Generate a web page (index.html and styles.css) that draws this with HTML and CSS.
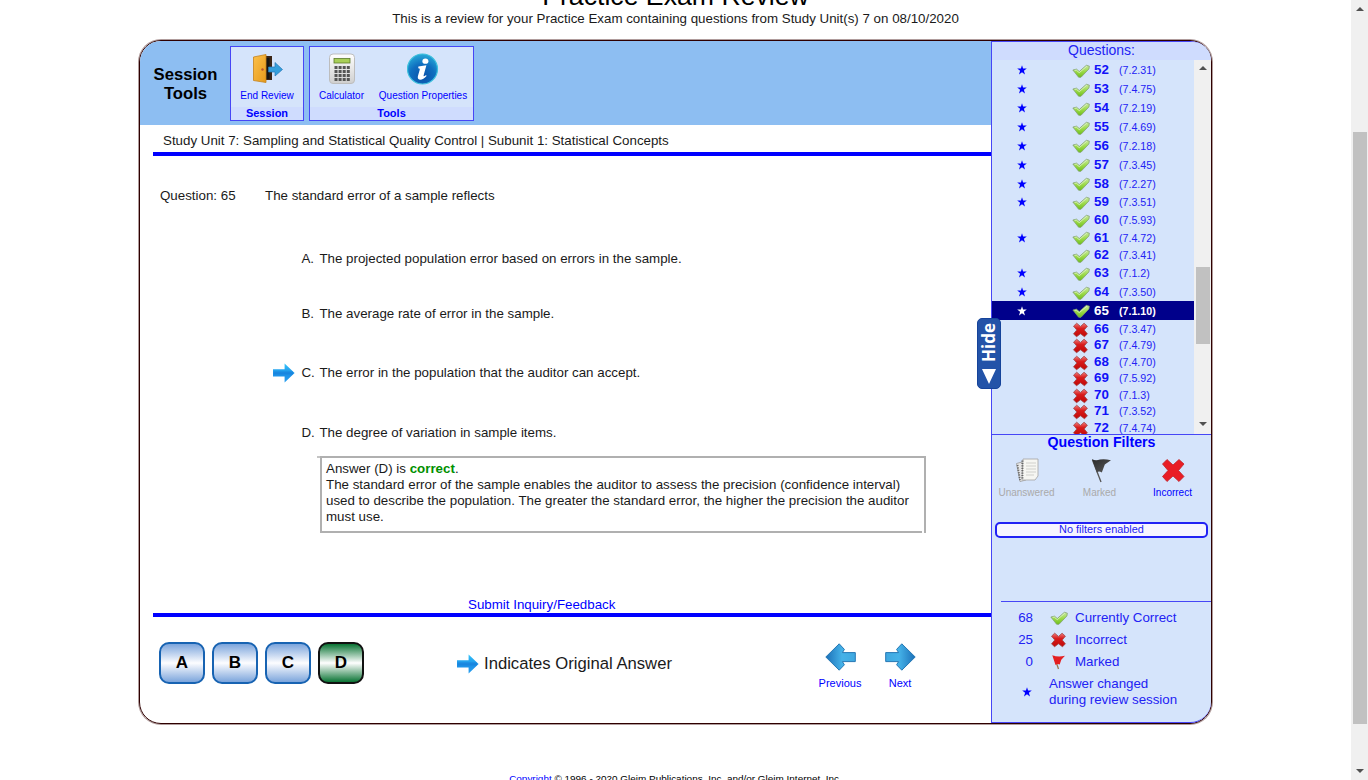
FILE: index.html
```html
<!DOCTYPE html>
<html lang="en">
<head>
<meta charset="utf-8">
<title>Practice Exam Review</title>
<link rel="stylesheet" href="styles.css">
</head>
<body>
<svg class="defs" width="0" height="0" aria-hidden="true">
  <defs>
    <linearGradient id="gGreen" x1="0" y1="0" x2="0" y2="1"><stop offset="0" stop-color="#c9e8a4"/><stop offset=".5" stop-color="#9ddb4c"/><stop offset="1" stop-color="#6fbf1c"/></linearGradient>
    <linearGradient id="gRed" x1="0" y1="0" x2="0" y2="1"><stop offset="0" stop-color="#f0797a"/><stop offset=".4" stop-color="#d81b1b"/><stop offset="1" stop-color="#c00808"/></linearGradient>
    <linearGradient id="gArrow" x1="0" y1="0" x2="0" y2="1"><stop offset="0" stop-color="#35c6fb"/><stop offset=".55" stop-color="#1b8fe6"/><stop offset="1" stop-color="#2aa0f0"/></linearGradient>
    <linearGradient id="gNav" x1="0" y1="0" x2="1" y2="0"><stop offset="0" stop-color="#3fa8e0"/><stop offset=".45" stop-color="#45b2e8"/><stop offset="1" stop-color="#1c70b8"/></linearGradient>
    <linearGradient id="gDoor" x1="0" y1="0" x2="1" y2="1"><stop offset="0" stop-color="#fcc04a"/><stop offset="1" stop-color="#e59a1c"/></linearGradient>
    <linearGradient id="gCalc" x1="0" y1="0" x2="0" y2="1"><stop offset="0" stop-color="#fff"/><stop offset="1" stop-color="#cfcfcf"/></linearGradient>
    <radialGradient id="gInfo" cx=".5" cy=".75" r=".75"><stop offset="0" stop-color="#0a50a8"/><stop offset=".55" stop-color="#0f6fc0"/><stop offset="1" stop-color="#27a9d8"/></radialGradient>
    <linearGradient id="gFlag" x1="0" y1="0" x2="1" y2="1"><stop offset="0" stop-color="#2b2b2b"/><stop offset="1" stop-color="#5a5a5a"/></linearGradient>
    <symbol id="check" viewBox="0 0 16 14"><path d="M.4 5.6 3.8 4.8 6.4 7 13 1.2 15.8 2 15.4 4.6 8 12.4 5.8 12.4Z" fill="url(#gGreen)" stroke="#7f9f70" stroke-width=".7" stroke-linejoin="round"/><path d="M2 6 3.6 5.7 6.4 8.1 13.4 2" fill="none" stroke="#e6f6d4" stroke-width=".7"/></symbol>
    <symbol id="cross" viewBox="0 0 16 16"><path d="M4.2 1.2 8 4.4 11.6 1.2 14.9 4.2 11.7 8 14.9 11.8 12 14.8 8 11.8 4 14.8 1 11.8 4.3 8 1 4.2Z" fill="url(#gRed)" stroke="#a04646" stroke-width=".8" stroke-linejoin="round"/></symbol>
    <symbol id="star" viewBox="0 0 10 10"><path d="M5 .2 6.1 3.6H9.8L6.9 5.8 8 9.6 5 7.3 2 9.6 3.1 5.8.2 3.6H3.9Z" fill="currentColor"/></symbol>
    <symbol id="arrow" viewBox="0 0 22 20"><path d="M0 6.2H11.6V.4L21.6 10 11.6 19.6V13.6H0Z" fill="url(#gArrow)"/><path d="M.5 9.9H20" stroke="#1578d6" stroke-width="3" opacity=".45"/></symbol>
    <symbol id="nav" viewBox="0 0 31 28"><path d="M.7 9.6H13.6L11.6 6.4 16.8.8 30.2 14 16.8 27.2 11.6 21.8 13.6 18.6H.7Z" fill="url(#gNav)" stroke="#2678b4" stroke-width="1"/></symbol>
  </defs>
</svg>

<div class="page">
  <header class="heading">
    <h1 class="title">Practice Exam Review</h1>
    <p class="subtitle">This is a review for your Practice Exam containing questions from Study Unit(s) 7 on 08/10/2020</p>
  </header>

  <div class="frame">
    <main class="main">
      <div class="toolbar">
        <div class="toolbar-title">Session<br>Tools</div>
        <section class="group group-session">
          <div class="tools">
            <a class="tool"><svg class="tool-icon" viewBox="0 0 32 32"><path d="M13 3H21V27H13Z" fill="#3a2415"/><path d="M14.5 5H18.5V26H14.5Z" fill="#151515"/><path d="M2.5 4 15 1.5V29.5L2.5 27.5Z" fill="url(#gDoor)" stroke="#c4811c" stroke-width=".8"/><circle cx="11.5" cy="16.5" r="1.2" fill="#b5532e"/><path d="M17.5 14H24V9.5L31.5 16.5 24 23V19H17.5Z" fill="#359fdc" stroke="#2777b6" stroke-width=".7"/></svg><span class="tool-label">End Review</span></a>
          </div>
          <div class="group-name">Session</div>
        </section>
        <section class="group group-tools">
          <div class="tools">
            <a class="tool tool-calc"><svg class="tool-icon" viewBox="0 0 32 32"><rect x="3.5" y="1" width="25" height="29.5" rx="3.5" fill="url(#gCalc)" stroke="#bdbdbd"/><rect x="8" y="5.5" width="16" height="4.5" fill="#a8cf58" stroke="#5c7a2c" stroke-width=".8"/><path d="M8.5 14.5H24M8.5 18.5H24M8.5 22.5H24M8.5 26.5H24" stroke="#555" stroke-width="3" stroke-dasharray="3 1.1"/></svg><span class="tool-label">Calculator</span></a>
            <a class="tool tool-info"><svg class="tool-icon" viewBox="0 0 32 32"><circle cx="15.5" cy="16" r="15" fill="url(#gInfo)" stroke="#3cc0dc" stroke-width="1.2"/><ellipse cx="18.4" cy="8.2" rx="3" ry="2.6" fill="#fff"/><path d="M11.4 13.6 19.4 12.2 16.6 22.6Q16.4 24 18.6 22.2L19.8 22.8Q15.6 27.4 12.2 26.6 10.2 25.8 11 22.8L12.8 16.6Q13 15.2 11.2 15.2Z" fill="#fff"/></svg><span class="tool-label">Question Properties</span></a>
          </div>
          <div class="group-name">Tools</div>
        </section>
      </div>

      <div class="unit">Study Unit 7: Sampling and Statistical Quality Control | Subunit 1: Statistical Concepts</div>

      <div class="content">
        <div class="question"><span class="question-no">Question: 65</span><span class="question-text">The standard error of a sample reflects</span></div>
        <ol class="answers">
          <li class="answer"><span class="mark"></span><span class="letter">A.</span><span>The projected population error based on errors in the sample.</span></li>
          <li class="answer"><span class="mark"></span><span class="letter">B.</span><span>The average rate of error in the sample.</span></li>
          <li class="answer"><span class="mark"><svg class="original"><use href="#arrow"/></svg></span><span class="letter">C.</span><span>The error in the population that the auditor can accept.</span></li>
          <li class="answer"><span class="mark"></span><span class="letter">D.</span><span>The degree of variation in sample items.</span></li>
        </ol>
        <div class="explain">
          <div>Answer (D) is <b class="ok">correct</b>.</div>
          <div>The standard error of the sample enables the auditor to assess the precision (confidence interval)</div>
          <div>used to describe the population. The greater the standard error, the higher the precision the auditor</div>
          <div>must use.</div>
        </div>
        <a class="feedback">Submit Inquiry/Feedback</a>
      </div>

      <footer class="bottom">
        <button class="pick">A</button><button class="pick">B</button><button class="pick">C</button><button class="pick pick-right">D</button>
        <div class="legend-original"><svg class="original"><use href="#arrow"/></svg><span>Indicates Original Answer</span></div>
        <a class="nav"><svg class="nav-icon flip"><use href="#nav"/></svg>Previous</a>
        <a class="nav"><svg class="nav-icon"><use href="#nav"/></svg>Next</a>
      </footer>
    </main>

    <aside class="side">
      <div class="side-title">Questions:</div>
      <div class="list-wrap">
        <div class="list">
          <div class="row starred"><svg class="star"><use href="#star"/></svg><svg class="check"><use href="#check"/></svg><b>52</b><span>(7.2.31)</span></div>
          <div class="row starred"><svg class="star"><use href="#star"/></svg><svg class="check"><use href="#check"/></svg><b>53</b><span>(7.4.75)</span></div>
          <div class="row starred"><svg class="star"><use href="#star"/></svg><svg class="check"><use href="#check"/></svg><b>54</b><span>(7.2.19)</span></div>
          <div class="row starred"><svg class="star"><use href="#star"/></svg><svg class="check"><use href="#check"/></svg><b>55</b><span>(7.4.69)</span></div>
          <div class="row starred"><svg class="star"><use href="#star"/></svg><svg class="check"><use href="#check"/></svg><b>56</b><span>(7.2.18)</span></div>
          <div class="row starred"><svg class="star"><use href="#star"/></svg><svg class="check"><use href="#check"/></svg><b>57</b><span>(7.3.45)</span></div>
          <div class="row starred"><svg class="star"><use href="#star"/></svg><svg class="check"><use href="#check"/></svg><b>58</b><span>(7.2.27)</span></div>
          <div class="row starred"><svg class="star"><use href="#star"/></svg><svg class="check"><use href="#check"/></svg><b>59</b><span>(7.3.51)</span></div>
          <div class="row"><i></i><svg class="check"><use href="#check"/></svg><b>60</b><span>(7.5.93)</span></div>
          <div class="row starred"><svg class="star"><use href="#star"/></svg><svg class="check"><use href="#check"/></svg><b>61</b><span>(7.4.72)</span></div>
          <div class="row"><i></i><svg class="check"><use href="#check"/></svg><b>62</b><span>(7.3.41)</span></div>
          <div class="row starred"><svg class="star"><use href="#star"/></svg><svg class="check"><use href="#check"/></svg><b>63</b><span>(7.1.2)</span></div>
          <div class="row starred"><svg class="star"><use href="#star"/></svg><svg class="check"><use href="#check"/></svg><b>64</b><span>(7.3.50)</span></div>
          <div class="row starred current"><svg class="star"><use href="#star"/></svg><svg class="check"><use href="#check"/></svg><b>65</b><span>(7.1.10)</span></div>
          <div class="row"><i></i><svg class="cross"><use href="#cross"/></svg><b>66</b><span>(7.3.47)</span></div>
          <div class="row"><i></i><svg class="cross"><use href="#cross"/></svg><b>67</b><span>(7.4.79)</span></div>
          <div class="row"><i></i><svg class="cross"><use href="#cross"/></svg><b>68</b><span>(7.4.70)</span></div>
          <div class="row"><i></i><svg class="cross"><use href="#cross"/></svg><b>69</b><span>(7.5.92)</span></div>
          <div class="row"><i></i><svg class="cross"><use href="#cross"/></svg><b>70</b><span>(7.1.3)</span></div>
          <div class="row"><i></i><svg class="cross"><use href="#cross"/></svg><b>71</b><span>(7.3.52)</span></div>
          <div class="row"><i></i><svg class="cross"><use href="#cross"/></svg><b>72</b><span>(7.4.74)</span></div>
        </div>
        <div class="scroll scroll-list"><span class="up"></span><span class="thumb"></span><span class="down"></span></div>
      </div>
      <div class="filters">
        <div class="filters-title">Question Filters</div>
        <div class="filter-row">
          <a class="filter off"><svg class="filter-icon" viewBox="0 0 28 28"><path d="M3.5 7.5 9 6 13 24 7 25.5Z" fill="#e8e8e8" stroke="#999" stroke-width=".8"/><path d="M10 3H25V20L22 24H9Z" fill="#f6f6f2" stroke="#aaa" stroke-width=".9"/><path d="M13 7H23M13 10H23M13 13H23M13 16H23M13 19H21" stroke="#d0d0cc"/><path d="M9.4 4.5V23" stroke="#666" stroke-width="2" stroke-dasharray="1.2 1.2"/><path d="M4.5 9 7 24" stroke="#666" stroke-width="1.8" stroke-dasharray="1.2 1.2"/></svg>Unanswered</a>
          <a class="filter off"><svg class="filter-icon" viewBox="0 0 28 28"><path d="M6.5 4 15 26" stroke="#555" stroke-width="1.3"/><path d="M6 3Q9 5 14 3.6 18 2.6 25 4.2L18.8 8.6 15.8 16.5Q13 14.6 10.8 16.5Z" fill="url(#gFlag)"/></svg>Marked</a>
          <a class="filter"><svg class="filter-icon" viewBox="0 0 28 28"><path d="M8 3.5 14 9 20 3.5 25 8 19.5 14.5 25 20.5 20 25.5 14 20 8 25.5 3.5 20.5 9 14.5 3.5 8Z" fill="#e91d25" stroke="#bf2228" stroke-width=".8"/></svg>Incorrect</a>
        </div>
        <div class="filter-state">No filters enabled</div>
      </div>
      <div class="summary">
        <div class="sum"><span class="count">68</span><svg class="check"><use href="#check"/></svg><span>Currently Correct</span></div>
        <div class="sum"><span class="count">25</span><svg class="cross"><use href="#cross"/></svg><span>Incorrect</span></div>
        <div class="sum"><span class="count">0</span><svg class="cross" viewBox="0 0 16 16"><path d="M3.5 2 8 15" stroke="#9a7a50" stroke-width="1.3"/><path d="M1.8 1.2Q7 3.2 14.5 1.8L10.8 5.8 9.2 10.6Q7 9.4 5 11Z" fill="#e41f22"/></svg><span>Marked</span></div>
        <div class="changed"><svg class="star"><use href="#star"/></svg><span>Answer changed<br>during review session</span></div>
      </div>
      <div class="hide"><span>Hide</span><i class="hide-arrow"></i></div>
    </aside>
  </div>

  <p class="copyright"><a>Copyright</a> © 1996 - 2020 Gleim Publications, Inc. and/or Gleim Internet, Inc.</p>
</div>
<div class="scroll scroll-page"><span class="up"></span><span class="thumb"></span><span class="down"></span></div>
</body>
</html>
```
FILE: styles.css
```css
* { box-sizing: border-box; }
body { margin: 0; height: 780px; overflow: hidden; display: flex; background: #fff; color: #1a1a1a; font: 13.333px/16px "Liberation Sans", Arial, sans-serif; }
.defs { position: absolute; }
svg { display: block; }
a { color: #00f; }
.page { width: 1351px; height: 780px; overflow: hidden; }
.heading { display: flow-root; height: 40px; text-align: center; }
.title { margin: -19px 0 0; font-size: 26.67px; line-height: 30px; font-weight: 400; color: #000; }
.subtitle { margin: 0; line-height: 16px; }

.frame { display: flex; width: 1073px; height: 684px; margin-left: 139px; border: 1px solid #2e0000; border-radius: 22px; box-shadow: 0 0 0 1px rgba(58, 8, 8, .4); }
.main { width: 851px; display: flex; flex-direction: column; }
.toolbar { display: flex; height: 84px; padding-top: 5px; background: #8dbef2; border-top-left-radius: 21px; }
.toolbar-title { width: 90px; padding: 19px 0 0 1px; text-align: center; font-size: 16.67px; line-height: 19px; font-weight: 700; color: #000; }
.group { height: 75px; border: 1px solid #4646f6; background: #d5e4fb; }
.group-session { width: 74px; margin-right: 5px; }
.group-tools { width: 165px; }
.tools { display: flex; height: 60px; }
.tool { display: flex; flex-direction: column; align-items: center; padding-top: 6px; width: 100%; font-size: 10px; line-height: 12px; }
.tool-calc { width: 63px; }
.tool-info { width: 100px; }
.tool-icon { width: 32px; height: 32px; margin-bottom: 5px; }
.tool-label { white-space: nowrap; }
.group-name { height: 13px; background: #cfdcfe; color: #00f; font-weight: 700; font-size: 11px; line-height: 13px; text-align: center; }
.unit { height: 31px; margin-left: 13px; padding: 8px 0 0 10px; border-bottom: 4px solid #00f; }
.content { height: 461px; margin-left: 13px; border-bottom: 4px solid #00f; display: flex; flex-direction: column; }
.question { display: flex; padding: 32px 0 0 7px; }
.question-no { width: 105px; }
.answers { list-style: none; margin: 0; padding: 38px 0 0 120px; height: 253px; }
.answer { display: flex; align-items: center; }
.answer:first-child { height: 34px; margin-bottom: 26px; }
.answer:nth-child(2) { height: 24px; margin-bottom: 31px; }
.answer:nth-child(3) { height: 32px; margin-bottom: 28px; }
.answer:nth-child(4) { height: 32px; }
.mark { width: 28.4px; }
.original { width: 22px; height: 20px; }
.letter { width: 18px; white-space: nowrap; }
.explain { position: relative; width: 606px; height: 77px; margin: 0 0 0 167px; padding: 3px 0 0 4px; border: 2px solid #b0b0b0; border-bottom: 0; white-space: nowrap; background: linear-gradient(#b0b0b0, #b0b0b0) left bottom / 600px 2px no-repeat; }
.explain::before { content: ""; position: absolute; left: -5px; top: -2px; width: 3px; height: 2px; background: #c4c4c4; }
.ok { color: #009000; }
.feedback { margin: 64px 0 0 315px; }
.bottom { display: flex; padding: 25px 0 0 19px; }
.pick { flex: none; width: 46px; height: 42px; margin-right: 7px; padding: 0 0 1px; border: 2px solid #1763b2; border-radius: 10px; background: linear-gradient(#7ca5dc, #fdfdff 50%, #7ca5dc); font: 700 17px "Liberation Sans", Arial, sans-serif; color: #000; }
.pick-right { border-color: #111; background: linear-gradient(#0a7434, #fff 50%, #0a7434); }
.legend-original { flex: none; display: flex; align-items: center; gap: 5px; width: 439px; height: 44px; padding-left: 86px; font-size: 16.67px; white-space: nowrap; }
.nav { flex: none; width: 60px; display: flex; flex-direction: column; align-items: center; font-size: 11px; line-height: 13px; }
.nav-icon { width: 31px; height: 28px; margin: 1px 0 6px; }
.flip { transform: scaleX(-1); }

.side { position: relative; width: 220px; flex: none; border: 1px solid #4646f6; border-right: 0; border-radius: 0 21px 21px 0; background: #d5e4fb; color: #2222f4; }
.side-title { height: 18px; padding-top: 1px; border-top-right-radius: 20px; background: #cfdcfe; text-align: center; font-size: 14px; line-height: 15px; }
.list-wrap { display: flex; height: 375px; border-bottom: 1px solid #4646f6; overflow: hidden; }
.list { width: 202px; padding-top: 1px; }
.row { display: flex; align-items: center; height: 16.5px; padding-left: 25px; }
.row.starred { height: 18.87px; }
.row .star, .row i { width: 10px; height: 10px; margin-right: 45px; color: #00f; }
.check { width: 18px; height: 15px; margin-right: 4px; }
.cross { width: 17px; height: 16px; margin-right: 5px; }
.row .check, .row .cross { position: relative; top: 1px; }
.row b { width: 25px; font-size: 13.333px; color: #1111f8; }
.row span { font-size: 10.67px; }
.current { background: #00008b; }
.row.current .star, .row.current b, .row.current span { color: #fff; font-weight: 700; }
.scroll { display: flex; flex-direction: column; align-items: center; background: #f0f0f0; }
.scroll-list { width: 17px; padding: 6px 0; }
.thumb { width: 14px; background: #c1c1c1; }
.scroll-list .thumb { height: 77px; margin: 197px 0 78px; }
.up, .down { width: 0; height: 0; border: 4px solid transparent; }
.up { border-top: 0; border-bottom-color: #505050; }
.down { border-bottom: 0; border-top-color: #505050; }
.scroll-page { width: 17px; height: 780px; padding-top: 7px; }
.scroll-page .thumb { height: 592px; margin: 121px 0 45px; }
.filters { height: 166px; }
.filters-title { text-align: center; color: #00f; font-weight: 700; font-size: 14.2px; line-height: 15px; }
.filter-row { display: flex; margin-left: -2px; padding-top: 6px; }
.filter { width: 73px; display: flex; flex-direction: column; align-items: center; font-size: 10px; line-height: 12px; }
.filter-icon { width: 28px; height: 28px; margin-bottom: 3px; }
.off { color: #aaa; }
.filter-state { width: 213px; height: 16px; margin: 23px 0 0 3px; border: 2px solid #2222f4; border-radius: 5px; background: #f7f5ff; font-size: 10.9px; line-height: 11px; text-align: center; }
.summary { margin-left: 9px; border-top: 1px solid #4646f6; padding-top: 5px; }
.sum { display: flex; align-items: center; height: 22px; }
.count { width: 32px; margin-right: 17px; text-align: right; }
.sum .check { margin-right: 7px; }
.sum .cross { margin-right: 8px; }
.changed { display: flex; align-items: center; padding: 3px 0 0 21px; }
.changed .star { width: 10px; height: 10px; margin-right: 17px; color: #00f; }
.hide { position: absolute; left: -15px; top: 276px; width: 24px; height: 71px; display: flex; flex-direction: column; align-items: center; justify-content: space-between; padding: 4px 0; border: 1px solid #15439a; border-radius: 5px; background: #2353a8; color: #fff; font: 700 17px/22px "Open Sans", sans-serif; }
.hide span { writing-mode: vertical-rl; transform: rotate(180deg); }
.hide-arrow { border: 7px solid transparent; border-top: 15px solid #fff; border-bottom: 0; }
.copyright { margin: 48px 0 0; text-align: center; font-size: 9.95px; line-height: 14px; color: #000; }
```
